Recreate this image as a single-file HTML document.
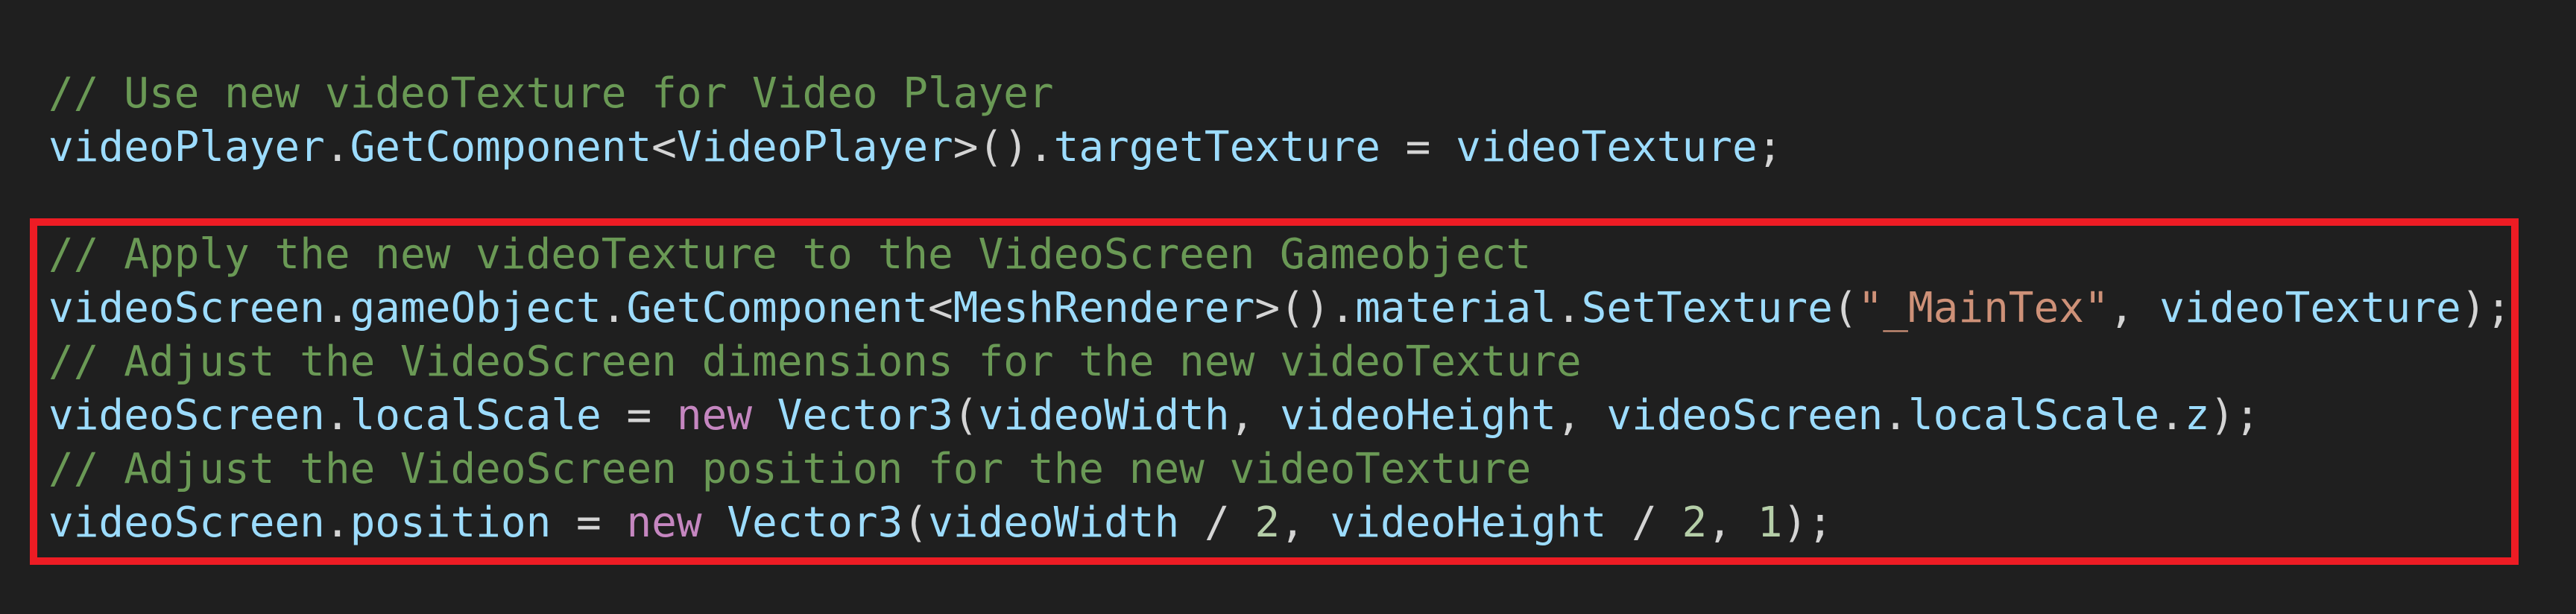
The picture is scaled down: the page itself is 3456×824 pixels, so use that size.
<!DOCTYPE html>
<html><head><meta charset="utf-8"><style>
html,body{margin:0;padding:0;background:#1f1f1f;width:3456px;height:824px;overflow:hidden}
pre{position:absolute;left:65px;top:90px;margin:0;font-family:"DejaVu Sans Mono","Liberation Mono",monospace;font-size:56px;line-height:72px;color:#9cdcfe}
.c{color:#6a9955}.p{color:#d4d4d4}.s{color:#ce9178}.k{color:#c586c0}.n{color:#b5cea8}
.box{position:absolute;left:40px;top:293px;width:3319px;height:445px;border:10px solid #ed1c24}
</style></head><body>
<div class="box"></div>
<pre><span class="c">// Use new videoTexture for Video Player</span>
videoPlayer<span class="p">.</span>GetComponent<span class="p">&lt;</span>VideoPlayer<span class="p">&gt;().</span>targetTexture <span class="p">=</span> videoTexture<span class="p">;</span>

<span class="c">// Apply the new videoTexture to the VideoScreen Gameobject</span>
videoScreen<span class="p">.</span>gameObject<span class="p">.</span>GetComponent<span class="p">&lt;</span>MeshRenderer<span class="p">&gt;().</span>material<span class="p">.</span>SetTexture<span class="p">(</span><span class="s">"_MainTex"</span><span class="p">,</span> videoTexture<span class="p">);</span>
<span class="c">// Adjust the VideoScreen dimensions for the new videoTexture</span>
videoScreen<span class="p">.</span>localScale <span class="p">=</span> <span class="k">new</span> Vector3<span class="p">(</span>videoWidth<span class="p">,</span> videoHeight<span class="p">,</span> videoScreen<span class="p">.</span>localScale<span class="p">.</span>z<span class="p">);</span>
<span class="c">// Adjust the VideoScreen position for the new videoTexture</span>
videoScreen<span class="p">.</span>position <span class="p">=</span> <span class="k">new</span> Vector3<span class="p">(</span>videoWidth <span class="p">/</span> <span class="n">2</span><span class="p">,</span> videoHeight <span class="p">/</span> <span class="n">2</span><span class="p">,</span> <span class="n">1</span><span class="p">);</span></pre>
</body></html>
